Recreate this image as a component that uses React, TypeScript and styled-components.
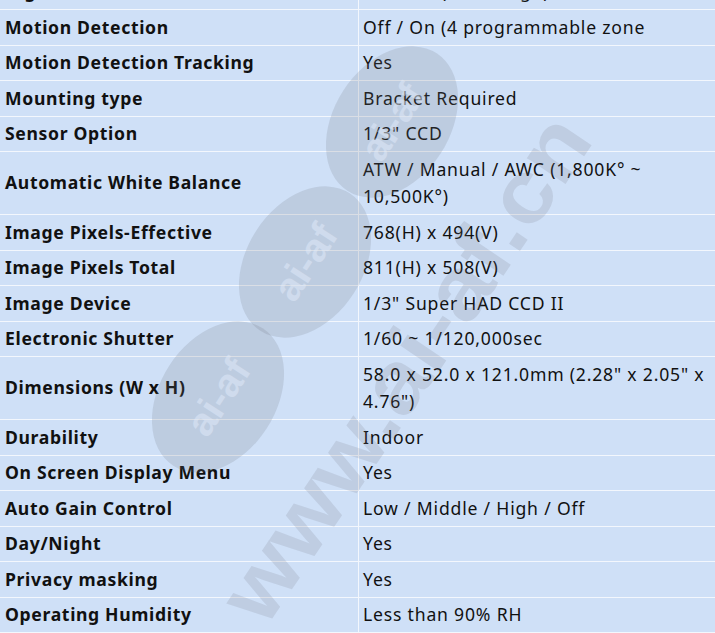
import React from "react";
import styled, { createGlobalStyle } from "styled-components";

const rows: [string, string][] = [
  ["Digital Noise Reduction", "Off / On (Low / High)"],
  ["Motion Detection", "Off / On (4 programmable zone"],
  ["Motion Detection Tracking", "Yes"],
  ["Mounting type", "Bracket Required"],
  ["Sensor Option", '1/3" CCD'],
  ["Automatic White Balance", "ATW / Manual / AWC (1,800K° ~ 10,500K°)"],
  ["Image Pixels-Effective", "768(H) x 494(V)"],
  ["Image Pixels Total", "811(H) x 508(V)"],
  ["Image Device", '1/3" Super HAD CCD II'],
  ["Electronic Shutter", "1/60 ~ 1/120,000sec"],
  ["Dimensions (W x H)", '58.0 x 52.0 x 121.0mm (2.28" x 2.05" x 4.76")'],
  ["Durability", "Indoor"],
  ["On Screen Display Menu", "Yes"],
  ["Auto Gain Control", "Low / Middle / High / Off"],
  ["Day/Night", "Yes"],
  ["Privacy masking", "Yes"],
  ["Operating Humidity", "Less than 90% RH"],
];

// logo badges of the watermark, centre x/y
const badges = [
  { x: 392, y: 122 },
  { x: 305, y: 262 },
  { x: 218, y: 397 },
];

const App = () => {
  return (
    <PageS>
      <GlobalStyle />
      <SpecTableS>
        <tbody>
          {rows.map(([label, value]) => (
            <tr key={label}>
              <LabelCellS>{label}</LabelCellS>
              <ValueCellS>{value}</ValueCellS>
            </tr>
          ))}
        </tbody>
      </SpecTableS>
      <Watermark />
    </PageS>
  );
};

const Watermark = () => {
  return (
    <WatermarkS width="715" height="633" viewBox="0 0 715 633">
      {badges.map((b) => (
        <g key={b.x} transform={`translate(${b.x} ${b.y}) rotate(-57)`}>
          <ellipse rx="82" ry="58" fill="rgba(110,115,125,0.19)" />
          <text
            x="0"
            y="14"
            textAnchor="middle"
            fontSize="40"
            fontWeight="bold"
            fontFamily="'Liberation Sans', sans-serif"
            fill="rgba(225,235,250,0.5)"
          >
            ai-af
          </text>
        </g>
      ))}
      <g transform="translate(405 368) rotate(-56)">
        <text
          x="0"
          y="30"
          textAnchor="middle"
          fontSize="88"
          fontWeight="bold"
          fontFamily="'Liberation Sans', sans-serif"
          textLength="590"
          lengthAdjust="spacingAndGlyphs"
          fill="rgba(110,115,125,0.17)"
        >
          www.ai-af.cn
        </text>
      </g>
    </WatermarkS>
  );
};

//style-----------------------------------------
const GlobalStyle = createGlobalStyle`
  html, body {
    margin: 0;
    padding: 0;
    background: #cfe0f7;
    overflow: hidden;
  }
`;
const PageS = styled.div`
  position: relative;
  width: 715px;
  height: 633px;
  overflow: hidden;
  background: #cfe0f7;
`;
const SpecTableS = styled.table`
  width: 715px;
  margin-top: -25.5px;
  border-collapse: collapse;
  table-layout: fixed;
  font-family: "Noto Sans", "Open Sans", sans-serif;
  font-size: 17.6px;
  line-height: 27.5px;
  color: #111;
`;
const LabelCellS = styled.td`
  width: 348px;
  padding: 3.5px 5px;
  border-bottom: 1px solid #f3f7fd;
  border-right: 1px solid #f3f7fd;
  font-weight: bold;
  letter-spacing: 0.65px;
  vertical-align: middle;
`;
const ValueCellS = styled.td`
  padding: 3.5px 5px 3.5px 4px;
  border-bottom: 1px solid #f3f7fd;
  letter-spacing: 0.8px;
  vertical-align: middle;
`;
const WatermarkS = styled.svg`
  position: absolute;
  left: 0;
  top: 0;
  pointer-events: none;
`;

export default App;
